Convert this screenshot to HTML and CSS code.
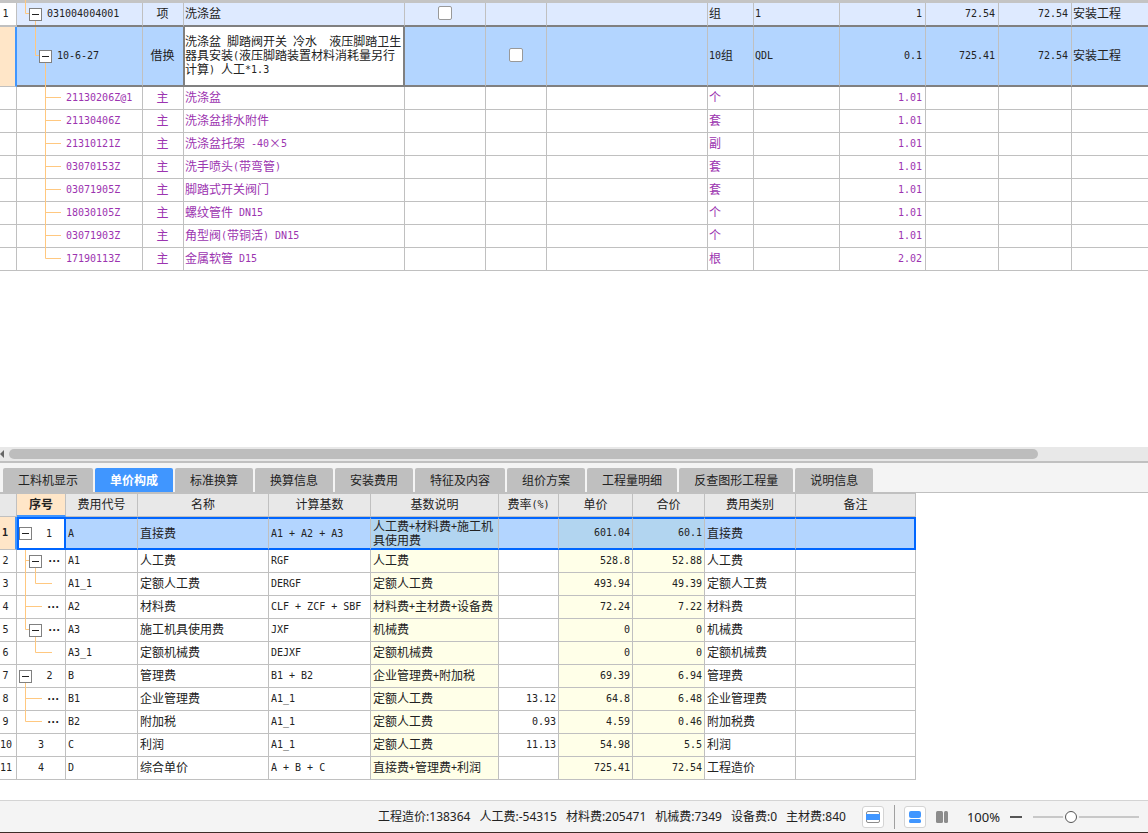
FILE: index.html
```html
<!DOCTYPE html>
<html lang="zh-CN">
<head>
<meta charset="utf-8">
<title>单价构成</title>
<link rel="stylesheet" href="styles.css">
</head>
<body>
<main class="upper">
<table class="grid items">
<colgroup><col class="w17"><col class="w126"><col class="w41"><col class="w221"><col class="w81"><col class="w61"><col class="w161"><col class="w46"><col class="w86"><col class="w86"><col class="w73"><col class="w73"><col></colgroup>
<tbody>
<tr class="parent"><td class="no m">1</td><td class="m"><div class="tree"><svg width="12" height="22"><path d="M8.5 -3V10.5H12M18.5 17V22"/></svg><button class="toggle" aria-label="折叠"></button><span class="code">031004004001</span></div></td><td class="c">项</td><td>洗涤盆</td><td class="c"><input type="checkbox" aria-label="选择清单"></td><td></td><td></td><td>组</td><td class="m">1</td><td class="m r">1</td><td class="m r">72.54</td><td class="m r">72.54</td><td>安装工程</td></tr>
<tr class="current"><td class="no"></td><td class="m"><div class="tree"><svg width="22" height="58"><path d="M18.5 0V28.5H22M28.5 35V60"/></svg><button class="toggle" aria-label="折叠"></button><span class="code">10-6-27</span></div></td><td class="c">借换</td><td class="editing">洗涤盆<span class="m"> </span>脚踏阀开关<span class="m"> </span>冷水<span class="m">  </span>液压脚踏卫生<br>器具安装<span class="m">(</span>液压脚踏装置材料消耗量另行<br>计算<span class="m">) </span>人工<span class="m">*1.3</span></td><td></td><td class="c"><input type="checkbox" aria-label="选择定额"></td><td></td><td><span class="m">10</span>组</td><td class="m">QDL</td><td class="m r">0.1</td><td class="m r">725.41</td><td class="m r">72.54</td><td>安装工程</td></tr>
<tr class="mat"><td></td><td class="m"><div class="tree"><svg width="44" height="22"><path d="M28.5 0V23M28.5 10.5H44"/></svg><span class="code">21130206Z@1</span></div></td><td class="c">主</td><td>洗涤盆</td><td></td><td></td><td></td><td>个</td><td></td><td class="m r">1.01</td><td></td><td></td><td></td></tr>
<tr class="mat"><td></td><td class="m"><div class="tree"><svg width="44" height="22"><path d="M28.5 0V23M28.5 10.5H44"/></svg><span class="code">21130406Z</span></div></td><td class="c">主</td><td>洗涤盆排水附件</td><td></td><td></td><td></td><td>套</td><td></td><td class="m r">1.01</td><td></td><td></td><td></td></tr>
<tr class="mat"><td></td><td class="m"><div class="tree"><svg width="44" height="22"><path d="M28.5 0V23M28.5 10.5H44"/></svg><span class="code">21310121Z</span></div></td><td class="c">主</td><td>洗涤盆托架<span class="m"> -40</span><span class="wide">×</span><span class="m">5</span></td><td></td><td></td><td></td><td>副</td><td></td><td class="m r">1.01</td><td></td><td></td><td></td></tr>
<tr class="mat"><td></td><td class="m"><div class="tree"><svg width="44" height="22"><path d="M28.5 0V23M28.5 10.5H44"/></svg><span class="code">03070153Z</span></div></td><td class="c">主</td><td>洗手喷头<span class="m">(</span>带弯管<span class="m">)</span></td><td></td><td></td><td></td><td>套</td><td></td><td class="m r">1.01</td><td></td><td></td><td></td></tr>
<tr class="mat"><td></td><td class="m"><div class="tree"><svg width="44" height="22"><path d="M28.5 0V23M28.5 10.5H44"/></svg><span class="code">03071905Z</span></div></td><td class="c">主</td><td>脚踏式开关阀门</td><td></td><td></td><td></td><td>套</td><td></td><td class="m r">1.01</td><td></td><td></td><td></td></tr>
<tr class="mat"><td></td><td class="m"><div class="tree"><svg width="44" height="22"><path d="M28.5 0V23M28.5 10.5H44"/></svg><span class="code">18030105Z</span></div></td><td class="c">主</td><td>螺纹管件<span class="m"> DN15</span></td><td></td><td></td><td></td><td>个</td><td></td><td class="m r">1.01</td><td></td><td></td><td></td></tr>
<tr class="mat"><td></td><td class="m"><div class="tree"><svg width="44" height="22"><path d="M28.5 0V23M28.5 10.5H44"/></svg><span class="code">03071903Z</span></div></td><td class="c">主</td><td>角型阀<span class="m">(</span>带铜活<span class="m">) DN15</span></td><td></td><td></td><td></td><td>个</td><td></td><td class="m r">1.01</td><td></td><td></td><td></td></tr>
<tr class="mat"><td></td><td class="m"><div class="tree"><svg width="44" height="22"><path d="M28.5 0V10.5H44"/></svg><span class="code">17190113Z</span></div></td><td class="c">主</td><td>金属软管<span class="m"> D15</span></td><td></td><td></td><td></td><td>根</td><td></td><td class="m r">2.02</td><td></td><td></td><td></td></tr>
</tbody>
</table>
</main>
<div class="scroll"><button class="scroll-left" aria-label="向左滚动"></button><div class="thumb"></div></div>
<section class="lower">
<nav class="tabs">
<button>工料机显示</button><button class="active">单价构成</button><button>标准换算</button><button>换算信息</button><button>安装费用</button><button>特征及内容</button><button>组价方案</button><button>工程量明细</button><button>反查图形工程量</button><button>说明信息</button>
</nav>
<table class="grid fees">
<colgroup><col class="w17"><col class="w49"><col class="w72"><col class="w131"><col class="w102"><col class="w128"><col class="w60"><col class="w74"><col class="w72"><col class="w91"><col class="w120"></colgroup>
<thead>
<tr><th></th><th class="sorted">序号</th><th>费用代号</th><th>名称</th><th>计算基数</th><th>基数说明</th><th>费率<span class="m">(%)</span></th><th>单价</th><th>合价</th><th>费用类别</th><th>备注</th></tr>
</thead>
<tbody>
<tr class="picked"><td class="no m">1</td><td class="m"><div class="tree"><svg width="0" height="29"><path d="M6.5 20V31"/></svg><button class="toggle" aria-label="折叠"></button><span class="seq">1</span></div></td><td class="m">A</td><td>直接费</td><td class="m">A1 + A2 + A3</td><td class="y">人工费<span class="m">+</span>材料费<span class="m">+</span>施工机<br>具使用费</td><td></td><td class="m r y">601.04</td><td class="m r y">60.1</td><td>直接费</td><td></td></tr>
<tr><td class="no m">2</td><td class="m"><div class="tree"><svg width="12" height="22"><path d="M8.5 0V23M8.5 10.5H12M18.5 17V23"/></svg><button class="toggle" aria-label="折叠"></button><span class="seq dots">···</span></div></td><td class="m">A1</td><td>人工费</td><td class="m">RGF</td><td class="y">人工费</td><td></td><td class="m r y">528.8</td><td class="m r y">52.88</td><td>人工费</td><td></td></tr>
<tr><td class="no m">3</td><td class="m"><div class="tree"><svg width="36" height="22"><path d="M8.5 0V23M18.5 0V10.5H35"/></svg></div></td><td class="m">A1_1</td><td>定额人工费</td><td class="m">DERGF</td><td class="y">定额人工费</td><td></td><td class="m r y">493.94</td><td class="m r y">49.39</td><td>定额人工费</td><td></td></tr>
<tr><td class="no m">4</td><td class="m"><div class="tree"><svg width="25" height="22"><path d="M8.5 0V23M8.5 10.5H25"/></svg><span class="seq dots">···</span></div></td><td class="m">A2</td><td>材料费</td><td class="m">CLF + ZCF + SBF</td><td class="y">材料费<span class="m">+</span>主材费<span class="m">+</span>设备费</td><td></td><td class="m r y">72.24</td><td class="m r y">7.22</td><td>材料费</td><td></td></tr>
<tr><td class="no m">5</td><td class="m"><div class="tree"><svg width="12" height="22"><path d="M8.5 0V10.5H12M18.5 17V23"/></svg><button class="toggle" aria-label="折叠"></button><span class="seq dots">···</span></div></td><td class="m">A3</td><td>施工机具使用费</td><td class="m">JXF</td><td class="y">机械费</td><td></td><td class="m r y">0</td><td class="m r y">0</td><td>机械费</td><td></td></tr>
<tr><td class="no m">6</td><td class="m"><div class="tree"><svg width="36" height="22"><path d="M18.5 0V10.5H35"/></svg></div></td><td class="m">A3_1</td><td>定额机械费</td><td class="m">DEJXF</td><td class="y">定额机械费</td><td></td><td class="m r y">0</td><td class="m r y">0</td><td>定额机械费</td><td></td></tr>
<tr><td class="no m">7</td><td class="m"><div class="tree"><svg width="2" height="22"><path d="M8.5 17V23"/></svg><button class="toggle" aria-label="折叠"></button><span class="seq">2</span></div></td><td class="m">B</td><td>管理费</td><td class="m">B1 + B2</td><td class="y">企业管理费<span class="m">+</span>附加税</td><td></td><td class="m r y">69.39</td><td class="m r y">6.94</td><td>管理费</td><td></td></tr>
<tr><td class="no m">8</td><td class="m"><div class="tree"><svg width="25" height="22"><path d="M8.5 0V23M8.5 10.5H25"/></svg><span class="seq dots">···</span></div></td><td class="m">B1</td><td>企业管理费</td><td class="m">A1_1</td><td class="y">定额人工费</td><td class="m r">13.12</td><td class="m r y">64.8</td><td class="m r y">6.48</td><td>企业管理费</td><td></td></tr>
<tr><td class="no m">9</td><td class="m"><div class="tree"><svg width="25" height="22"><path d="M8.5 0V10.5H25"/></svg><span class="seq dots">···</span></div></td><td class="m">B2</td><td>附加税</td><td class="m">A1_1</td><td class="y">定额人工费</td><td class="m r">0.93</td><td class="m r y">4.59</td><td class="m r y">0.46</td><td>附加税费</td><td></td></tr>
<tr><td class="no m">10</td><td class="m"><div class="tree"><span class="seq">3</span></div></td><td class="m">C</td><td>利润</td><td class="m">A1_1</td><td class="y">定额人工费</td><td class="m r">11.13</td><td class="m r y">54.98</td><td class="m r y">5.5</td><td>利润</td><td></td></tr>
<tr><td class="no m">11</td><td class="m"><div class="tree"><span class="seq">4</span></div></td><td class="m">D</td><td>综合单价</td><td class="m">A + B + C</td><td class="y">直接费<span class="m">+</span>管理费<span class="m">+</span>利润</td><td></td><td class="m r y">725.41</td><td class="m r y">72.54</td><td>工程造价</td><td></td></tr>
</tbody>
</table>
</section>
<footer class="status">
<div class="totals"><span>工程造价:138364</span><span>人工费:-54315</span><span>材料费:205471</span><span>机械费:7349</span><span>设备费:0</span><span>主材费:840</span></div>
<button class="tool boxed" aria-label="面板"><svg width="14" height="12" viewBox="0 0 14 12"><rect x=".5" y=".5" width="13" height="11" rx="1.5" fill="#fff" stroke="#8c8c8c"/><path d="M0 3h14v6H0z" fill="#4096ff"/></svg></button>
<span class="divider"></span>
<button class="tool boxed" aria-label="上下布局"><svg width="12" height="12" viewBox="0 0 12 12" fill="#4096ff"><rect width="12" height="7" rx="2"/><rect y="8" width="12" height="4" rx="1.5"/></svg></button>
<button class="tool" aria-label="左右布局"><svg width="12" height="12" viewBox="0 0 12 12" fill="#8c8c8c"><rect width="7" height="12" rx="1.5"/><rect x="8" width="4" height="12" rx="1.5"/></svg></button>
<label class="percent" for="zoom">100%</label>
<button class="minus" aria-label="缩小"></button>
<input id="zoom" type="range" min="0" max="100" value="34">
</footer>
</body>
</html>
```
FILE: styles.css
```css
* { box-sizing: border-box; }
body {
  margin: 0;
  min-height: 100vh;
  display: flex;
  flex-direction: column;
  overflow-x: hidden;
  background: #fff;
  color: #222;
  font: 12px/14px "Noto Sans CJK SC", sans-serif;
}
button { font: inherit; color: inherit; border: 0; padding: 0; margin: 0; background: none; }
.m { font-family: "DejaVu Sans Mono", monospace; font-size: 10px; line-height: 1; white-space: pre; }
span.m { vertical-align: 1px; }
.upper { flex: 1; }

/* grids */
.grid { table-layout: fixed; border-collapse: separate; border-spacing: 0; }
.grid td, .grid th {
  height: 23px;
  padding: 0 2px 2px;
  border-right: 1px solid #c0c0c0;
  border-bottom: 1px solid #c0c0c0;
  vertical-align: middle;
  text-align: left;
  font-weight: normal;
}
.grid td.m { padding-bottom: 0; }
.items { width: 100%; border-top: 3px solid #c4c4c4; }
.items td { padding-left: 1px; }
.items td.r { padding-right: 3px; }
.items td:last-child { border-right: 0; }
.grid .c { text-align: center; }
.grid .r { text-align: right; }
.grid .no { text-align: center; padding: 0 5px 0 0; }
.fees { width: 916px; }
.w17 { width: 17px; } .w41 { width: 41px; } .w46 { width: 46px; } .w49 { width: 49px; }
.w60 { width: 60px; } .w61 { width: 61px; } .w72 { width: 72px; } .w73 { width: 73px; }
.w74 { width: 74px; } .w81 { width: 81px; } .w86 { width: 86px; } .w91 { width: 91px; }
.w102 { width: 102px; } .w120 { width: 120px; } .w126 { width: 126px; } .w128 { width: 128px; }
.w131 { width: 131px; } .w161 { width: 161px; } .w221 { width: 221px; }

.grid .parent td { height: 24px; background: #deeaff; border-bottom: 2px solid #808080; }
.grid .parent .no { background: #fff; border-bottom: 2px solid #c0c0c0; }
.grid .current td { height: 60px; background: #b3d5ff; border-bottom: 2px solid #808080; }
.grid .current .no { background: #ffe6c8; border-bottom: 1px solid #c0c0c0; border-right: 2px solid #4096ff; }
.grid .current td:nth-child(3) { border-right-color: #808080; }
.grid .current .editing {
  background: #fff;
  border-right-color: #808080;
  box-shadow: inset 1px 0 #808080, inset -1px 0 #808080;
  padding-right: 0;
  white-space: nowrap;
}
.mat { color: #9c34b0; }
.wide { display: inline-block; width: 12px; text-align: center; }
.grid input[type="checkbox"] {
  appearance: none;
  display: block;
  width: 14px;
  height: 14px;
  margin: 0 auto;
  border: 1px solid #999;
  border-radius: 2px;
  background: #fff;
}

/* tree cells */
.grid td:has(.tree) { padding: 0; }
.tree { display: flex; align-items: center; }
.tree svg { flex: none; overflow: visible; fill: none; stroke: #ffc880; }
.toggle {
  flex: none;
  width: 13px;
  height: 13px;
  display: grid;
  place-items: center;
  border: 1px solid #808080;
  background: #fff;
}
.toggle::before { content: ""; width: 7px; height: 1px; background: #222; }
.code { padding-left: 5px; }
.seq { flex: 1; text-align: center; }
.toggle + .seq { padding-left: 2px; }
.dots { font: bold 12px/14px "Liberation Sans", sans-serif; }

/* horizontal scrollbar */
.scroll {
  display: flex;
  align-items: center;
  gap: 5px;
  height: 16px;
  background: #e8e8e8;
  border-bottom: 2px solid #c0c0c0;
}
.scroll-left { border: 4px solid transparent; border-left: 0; border-right-color: #666; }
.thumb { width: calc(90% - 4px); height: 10px; border-radius: 5px; background: #bdbdbd; }

/* lower pane */
.lower { padding-bottom: 20px; }
.tabs {
  display: flex;
  gap: 2px;
  padding: 5px 3px 0;
  background: #f4f4f4;
  border-bottom: 1px solid #c0c0c0;
}
.tabs button {
  height: 24px;
  padding: 0 15px;
  background: #bfbfbf;
  border-radius: 2px 2px 0 0;
  white-space: nowrap;
}
.tabs .active { background: #4096ff; color: #fff; font-weight: bold; }
.fees { border-top: 1px solid #c0c0c0; }
.grid.fees th { background: #e8e8e8; text-align: center; }
.grid.fees .sorted { background: #ffe6c8; border-bottom: 2px solid #4096ff; font-weight: bold; }
.fees .y { background: #ffffe8; }
.grid .picked td { height: 33px; background: #b3d5ff; border-top: 2px solid #0066ff; border-bottom: 2px solid #0066ff; }
.grid .picked td.y { background: #b2d5f0; padding-bottom: 1px; }
.grid .picked td:nth-child(2) { background: #fff; border: 2px solid #0066ff; }
.grid .picked td:last-child { border-right: 2px solid #0066ff; }
.grid .picked .no { background: #ffe6c8; border-top: 0; border-bottom: 1px solid #c0c0c0; border-right: 2px solid #4096ff; font-weight: bold; }

/* status bar */
.status {
  display: flex;
  align-items: center;
  justify-content: flex-end;
  height: 33px;
  padding-right: 9px;
  border-top: 1px solid #d4d4d4;
  border-bottom: 1px solid #3c2c28;
  background: #f4f4f4;
  font-family: "Noto Sans", "Noto Sans CJK SC", sans-serif;
}
.totals { display: flex; gap: 9px; margin-right: 16px; white-space: nowrap; }
.tool { display: grid; place-items: center; width: 22px; height: 22px; }
.boxed { border: 1px solid #d4d4d4; border-radius: 3px; background: #fff; }
.divider { width: 1px; height: 24px; margin: 0 9px 0 10px; background: #a0a0a0; }
.tool + .tool { margin-left: 5px; }
.percent { margin-left: 14px; font-size: 13px; }
.minus { width: 12px; height: 2px; margin: 0 11px 0 10px; background: #555; }
.status input {
  appearance: none;
  width: 106px;
  height: 14px;
  margin: 0;
  background: linear-gradient(#c8c8c8, #c8c8c8) center / 100% 2px no-repeat;
}
.status input::-webkit-slider-thumb {
  appearance: none;
  width: 12px;
  height: 12px;
  border: 1px solid #555;
  border-radius: 50%;
  background: #fff;
  box-shadow: 0 0 0 2px #f4f4f4;
}
```
